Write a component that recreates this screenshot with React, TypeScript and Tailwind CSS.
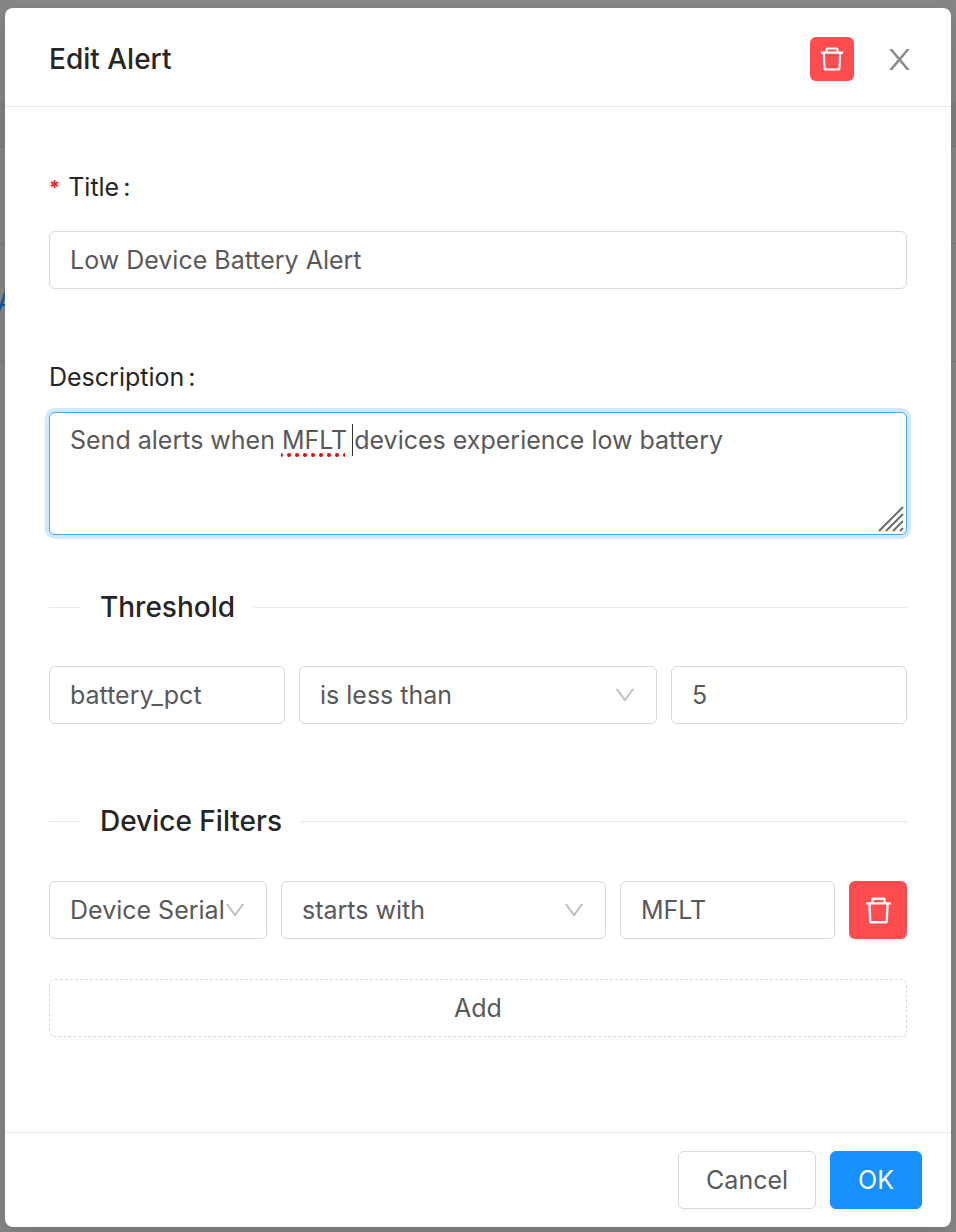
import React from "react";

const FIELD =
  "block h-[58px] w-full min-w-0 rounded-md border border-[#d9d9d9] bg-white px-5 text-[25px] text-[#595959] outline-none";

function TrashIcon({ className }: { className: string }) {
  return (
    <svg viewBox="64 64 896 896" fill="currentColor" aria-hidden="true" className={className}>
      <path d="M360 184h-8c4.400 0 8-3.600 8-8v8h304v-8c0 4.400 3.600 8 8 8h-8v72h72v-80c0-35.300-28.700-64-64-64H352c-35.300 0-64 28.700-64 64v80h72v-72zm504 72H160c-17.700 0-32 14.300-32 32v32c0 4.400 3.600 8 8 8h60.400l24.700 523c1.600 34.100 29.800 61 63.900 61h454c34.200 0 62.300-26.800 63.900-61l24.700-523H888c4.400 0 8-3.600 8-8v-32c0-17.700-14.300-32-32-32zM731.300 840H292.700l-24.200-512h487l-24.200 512z" />
    </svg>
  );
}

function CloseIcon() {
  return (
    <svg viewBox="64 64 896 896" fill="currentColor" aria-hidden="true" className="size-[29px]">
      <path d="M563.8 512l262.500-312.900c4.400-5.200.7-13.100-6.100-13.100h-79.800c-4.700 0-9.200 2.100-12.300 5.700L511.600 449.800 295.100 191.700c-3-3.600-7.500-5.700-12.300-5.700H203c-6.800 0-10.500 7.900-6.100 13.100L459.400 512 196.900 824.900A7.950 7.950 0 0 0 203 838h79.800c4.700 0 9.200-2.100 12.300-5.700l216.500-258.100 216.500 258.100c3 3.600 7.500 5.700 12.300 5.700h79.800c6.800 0 10.500-7.900 6.100-13.100L563.800 512z" />
    </svg>
  );
}

function DownIcon() {
  return (
    <svg viewBox="64 64 896 896" fill="currentColor" aria-hidden="true" className="size-[22px]">
      <path d="M884 256h-75c-5.100 0-9.900 2.500-12.900 6.600L512 654.200 227.900 262.600c-3-4.100-7.800-6.600-12.900-6.600h-75c-6.500 0-10.300 7.400-6.500 12.700l352.600 486.100c12.800 17.600 39 17.600 51.700 0l352.600-486.100c3.900-5.300.1-12.700-6.400-12.700z" />
    </svg>
  );
}

function SelectBox({ label, options }: { label: string; options: string[] }) {
  return (
    <div className="relative min-w-0">
      <select
        aria-label={label}
        className="block h-[58px] w-full min-w-0 appearance-none rounded-md border border-[#d9d9d9] bg-white pt-[2px] pl-5 text-[25px] text-[#595959] outline-none"
      >
        {options.map((option) => (
          <option key={option}>{option}</option>
        ))}
      </select>
      <span className="pointer-events-none absolute inset-y-0 right-[21px] flex items-center text-[#bfbfbf]">
        <DownIcon />
      </span>
    </div>
  );
}

function SectionTitle({ children }: { children: React.ReactNode }) {
  return (
    <div className="flex items-center gap-[19px]">
      <span className="h-px w-8 shrink-0 bg-[#e8e8e8]" />
      <h3 className="text-[28px] leading-[44px] font-medium">{children}</h3>
      <span className="h-px flex-1 bg-[#e8e8e8]" />
    </div>
  );
}

function Backdrop() {
  return (
    <div aria-hidden="true" className="absolute inset-0 overflow-hidden bg-[#878787]">
      <div className="h-[102px]" />
      <div className="h-[45px] border-b border-[#787878] bg-[#7f8183]" />
      <div className="h-[97px] border-b border-[#787878]" />
      <div className="flex h-[118px] items-center border-b border-[#787878]">
        <span className="-ml-[3px] text-[25px] text-[#0d5aa0]">A</span>
      </div>
    </div>
  );
}

export default function App() {
  return (
    <div className="relative min-h-screen px-[5px] pt-2 pb-[5px] font-['Inter','Liberation_Sans',sans-serif] text-[25px] text-[#262626]">
      <Backdrop />
      <div
        role="dialog"
        aria-labelledby="dialog-title"
        className="relative rounded-lg bg-white shadow-[0_8px_24px_rgba(0,0,0,0.15)]"
      >
        <header className="flex h-[99px] items-center border-b border-[#e8e8e8] pt-1 pr-[37px] pl-11">
          <h2 id="dialog-title" className="flex-1 text-[28px] leading-[44px] font-medium">
            Edit Alert
          </h2>
          <button
            type="button"
            aria-label="Delete alert"
            className="mr-[31px] flex size-11 items-center justify-center rounded-md bg-[#ff4d4f] text-white shadow-[0_3px_0_rgba(0,0,0,0.04)]"
          >
            <TrashIcon className="size-[26px]" />
          </button>
          <button type="button" aria-label="Close" className="text-[#8c8c8c]">
            <CloseIcon />
          </button>
        </header>

        <form className="px-11 pt-[59px] pb-[95px]">
          <label htmlFor="title" className="flex h-11 items-center">
            <span className="mr-2 text-[20px] leading-6 font-bold text-[#f5222d]">*</span>
            Title<span className="ml-1">:</span>
          </label>
          <input id="title" defaultValue="Low Device Battery Alert" className={`${FIELD} mt-[21px]`} />

          <label htmlFor="description" className="mt-[67px] flex h-11 items-center">
            Description<span className="ml-1">:</span>
          </label>
          <div className="relative mt-3">
            <textarea
              id="description"
              spellCheck={false}
              defaultValue="Send alerts when MFLT devices experience low battery"
              className="block h-[123px] w-full resize-none rounded-md border border-[#40a9ff] bg-white px-5 py-[7px] leading-10 text-[#595959] shadow-[0_0_0_4px_rgba(24,144,255,0.2)] outline-none"
            />
            <svg
              aria-hidden="true"
              viewBox="0 0 64 4"
              className="pointer-events-none absolute top-[41px] left-[232px] h-1 w-16"
            >
              <path d="M0 2H66" stroke="#ff0000" strokeWidth="4" strokeLinecap="round" strokeDasharray="0 8" />
            </svg>
            <span className="pointer-events-none absolute top-3 left-[303px] h-8 w-px bg-[#333333]" />
            <svg
              aria-hidden="true"
              viewBox="0 0 26 26"
              className="pointer-events-none absolute right-[3px] bottom-[3px] size-[26px]"
            >
              <path d="M1 25L25 1M8 25L25 8M15 25L25 15M22 25L25 22" stroke="#6e6e6e" strokeWidth="2" />
            </svg>
          </div>

          <div className="mt-[50px]">
            <SectionTitle>Threshold</SectionTitle>
          </div>
          <div className="mt-[37px] grid grid-cols-[236fr_358fr_236fr] gap-[14px]">
            <input aria-label="Metric" defaultValue="battery_pct" className={FIELD} />
            <SelectBox label="Comparison" options={["is less than", "is greater than"]} />
            <input aria-label="Threshold value" defaultValue="5" className={FIELD} />
          </div>

          <div className="mt-[75px]">
            <SectionTitle>Device Filters</SectionTitle>
          </div>
          <div className="mt-[38px] grid grid-cols-[218fr_325fr_215fr_58px] gap-[14px]">
            <SelectBox label="Filter field" options={["Device Serial"]} />
            <SelectBox label="Filter operator" options={["starts with", "ends with"]} />
            <input aria-label="Filter value" defaultValue="MFLT" className={FIELD} />
            <button
              type="button"
              aria-label="Delete filter"
              className="flex size-[58px] items-center justify-center rounded-md bg-[#ff4d4f] text-white shadow-[0_3px_0_rgba(0,0,0,0.04)]"
            >
              <TrashIcon className="size-[29px]" />
            </button>
          </div>
          <button
            type="button"
            className="mt-10 block h-[58px] w-full rounded-md border border-dashed border-[#d9d9d9] bg-white pt-[2px] text-[#595959] shadow-[0_3px_0_rgba(0,0,0,0.02)]"
          >
            Add
          </button>
        </form>

        <footer className="flex justify-end gap-[14px] border-t border-[#e8e8e8] py-[18px] pr-[29px]">
          <button
            type="button"
            className="h-[58px] rounded-md border border-[#d9d9d9] bg-white px-[27px] pt-[2px] text-[#595959] shadow-[0_3px_0_rgba(0,0,0,0.02)]"
          >
            Cancel
          </button>
          <button
            type="button"
            className="h-[58px] rounded-md border border-[#1890ff] bg-[#1890ff] px-[27px] pt-[2px] text-white shadow-[0_3px_0_rgba(0,0,0,0.04)]"
          >
            OK
          </button>
        </footer>
      </div>
    </div>
  );
}
